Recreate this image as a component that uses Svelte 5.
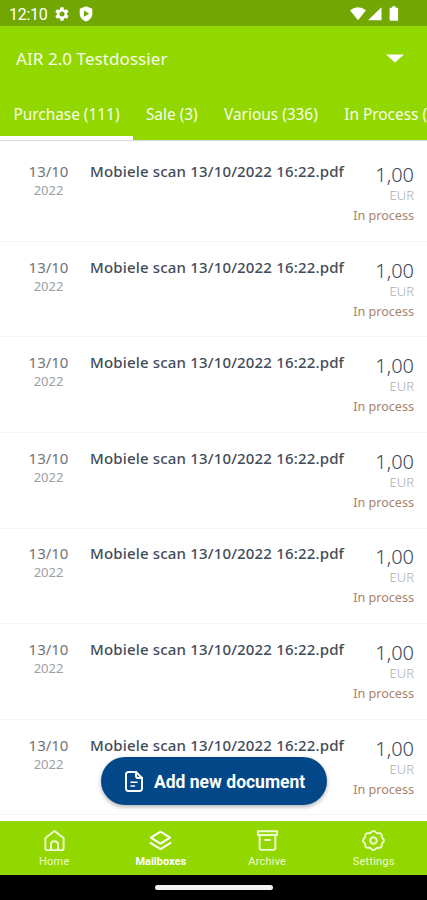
<script>
  const tabs = ['Purchase (111)', 'Sale (3)', 'Various (336)', 'In Process (4)'];

  const documents = Array.from({ length: 7 }, (_, id) => ({
    id,
    day: '13/10',
    year: '2022',
    name: 'Mobiele scan 13/10/2022 16:22.pdf',
    amount: '1,00',
    currency: 'EUR',
    status: 'In process'
  }));

  let activeTab = $state(0);
  let activePage = $state('Mailboxes');
</script>

<div class="screen">
  <div class="statusbar">
    <span class="clock">12:10</span>
    <svg class="gear" width="16" height="16" viewBox="0 0 24 24" fill="#fff">
      <path fill-rule="evenodd" d="M19.4 13a7.5 7.5 0 0 0 0-2l2.1-1.6c.2-.2.3-.4.1-.7l-2-3.4c-.1-.2-.4-.3-.6-.2l-2.5 1a7.3 7.3 0 0 0-1.7-1l-.4-2.6c0-.3-.2-.5-.5-.5h-4c-.2 0-.4.2-.5.5L9 5.1a7.3 7.3 0 0 0-1.7 1l-2.4-1c-.3-.1-.5 0-.7.2l-2 3.4c-.1.3 0 .5.2.7L4.500 11a7.500 7.500 0 0 0 0 2l-2.100 1.600c-.2.2-.3.4-.2.7l2 3.4c.2.2.4.3.7.2l2.4-1c.5.4 1.1.7 1.7 1l.4 2.6c.1.3.3.5.5.5h4c.3 0 .5-.2.5-.5l.4-2.6a7.3 7.3 0 0 0 1.7-1l2.5 1c.2.1.5 0 .6-.2l2-3.4c.2-.3.1-.5-.1-.7zM12 8.2a3.8 3.8 0 1 1 0 7.6 3.8 3.8 0 0 1 0-7.6z" />
    </svg>
    <svg class="shield" width="14" height="16" viewBox="0 0 14 16">
      <path d="M7 .3 13.3 2.8V7.5C13.3 11.3 10.6 14.4 7 15.6 3.4 14.4.7 11.3.7 7.5V2.8z" fill="#fff" />
      <path d="M5 4.6 10.2 7.7 5 10.8z" fill="#72a603" />
    </svg>
    <svg class="signals" width="50" height="16" viewBox="0 0 50 16" fill="#fff">
      <path d="M0 4.200Q8 -1.800 16 4.200L8 14.200z" />
      <path d="M31.500 1.300V14.200H18z" />
      <path d="M42.200.3h3.400v1.500h1.500q1 0 1 1v11q0 1-1 1h-6.500q-1 0-1-1v-11q0-1 1-1h1.600z" />
    </svg>
  </div>

  <header>
    <div class="dossier">
      <h1>AIR 2.0 Testdossier</h1>
      <svg width="18" height="9" viewBox="0 0 18 9"><path d="M0 .5H18L9 8.500z" fill="#fff" /></svg>
    </div>
    <nav class="tabs">
      {#each tabs as tab, i}
        <button class:active={i === activeTab} onclick={() => (activeTab = i)}>{tab}</button>
      {/each}
    </nav>
  </header>

  <main>
    {#each documents as doc (doc.id)}
      <article>
        <div class="date">
          <span class="day">{doc.day}</span>
          <span class="year">{doc.year}</span>
        </div>
        <div class="name">{doc.name}</div>
        <div class="total">
          <span class="amount">{doc.amount}</span>
          <span class="currency">{doc.currency}</span>
          <span class="status">{doc.status}</span>
        </div>
      </article>
    {/each}
    <button class="add">
      <svg width="18" height="21" viewBox="0 0 18 21" fill="none" stroke="#fff" stroke-width="1.9" stroke-linejoin="round" stroke-linecap="round">
        <path d="M11 1H3.500Q1 1 1 3.500v14Q1 20 3.500 20h11q2.500 0 2.500-2.500V7z" />
        <path d="M11 1v4q0 2 2 2h4" />
        <path d="M6 11.200h6M6 15h3.500" stroke-width="1.6" />
      </svg>
      <span>Add new document</span>
    </button>
  </main>

  <nav class="bottom">
    <button class:current={activePage === 'Home'} onclick={() => (activePage = 'Home')}>
      <svg viewBox="0 0 24 24">
        <path d="M2.500 9.500 12 2l9.500 7.500V20q0 2-2 2h-15q-2 0-2-2z" />
        <path d="M8.300 22v-6q0-3.300 3.700-3.300t3.700 3.300v6" />
      </svg>
      <span>Home</span>
    </button>
    <button class:current={activePage === 'Mailboxes'} onclick={() => (activePage = 'Mailboxes')}>
      <svg viewBox="0 0 24 24">
        <path d="M12 2.800 22 9 12 15.200 2 9z" />
        <path d="m1.500 14.500 10.500 6.500 10.500-6.500" />
      </svg>
      <span>Mailboxes</span>
    </button>
    <button class:current={activePage === 'Archive'} onclick={() => (activePage = 'Archive')}>
      <svg viewBox="0 0 24 24">
        <path d="M2 2.300h20v4H2zM3.800 6.500v13q0 2.300 2.300 2.300h11.800q2.300 0 2.300-2.300v-13M9.500 11.500h5" />
      </svg>
      <span>Archive</span>
    </button>
    <button class:current={activePage === 'Settings'} onclick={() => (activePage = 'Settings')}>
      <svg viewBox="0 0 24 24">
        <path d="M9.500 3.500Q12 .4 14.500 3.500q1 1.200 2.600.9 3.500-.6 3.500 3-.1 1.500 1.200 2.500 2.200 2.100 0 4.200-1.300 1-1.200 2.500 0 3.600-3.500 3-1.600-.3-2.600.9Q12 23.600 9.500 20.500q-1-1.200-2.600-.9-3.500.6-3.500-3 .1-1.500-1.200-2.500-2.200-2.100 0-4.200 1.300-1 1.200-2.500 0-3.600 3.500-3 1.600.3 2.600-.9z" />
        <circle cx="12" cy="12" r="3.400" />
      </svg>
      <span>Settings</span>
    </button>
  </nav>

  <div class="gesture"><div class="pill"></div></div>
</div>

<style>
  .screen {
    display: flex;
    flex-direction: column;
    width: 427px;
    height: 900px;
    overflow: hidden;
    background: #fff;
    font-family: 'Noto Sans', sans-serif;
  }

  button {
    padding: 0;
    border: 0;
    background: none;
    font-family: inherit;
    cursor: pointer;
  }

  svg {
    display: block;
    flex: none;
  }

  .statusbar {
    display: flex;
    align-items: center;
    flex: none;
    height: 26px;
    padding: 2px 27px 0 9px;
    box-sizing: border-box;
    background: #72a603;
    color: #fff;
  }

  .clock {
    width: 45px;
    padding-top: 1px;
    font: 400 16px/20px Roboto, sans-serif;
    letter-spacing: -0.3px;
  }

  .shield {
    margin-left: 9px;
  }

  .signals {
    margin-left: auto;
  }

  header {
    flex: none;
    height: 114px;
    background: #92d700;
    color: #f8fdea;
  }

  .dossier {
    display: flex;
    align-items: center;
    justify-content: space-between;
    height: 64px;
    padding: 0 23px 0 16px;
  }

  h1 {
    margin: 0;
    font-size: 17px;
    font-weight: 400;
    letter-spacing: 0.07px;
  }

  .tabs {
    display: flex;
    height: 50px;
    overflow: hidden;
  }

  .tabs button {
    flex: none;
    height: 50px;
    padding: 2px 13px 0 13.4px;
    box-sizing: border-box;
    border-bottom: 4px solid transparent;
    color: inherit;
    font-size: 15.4px;
    white-space: nowrap;
  }

  .tabs .active {
    border-bottom-color: #fff;
  }

  main {
    position: relative;
    flex: none;
    height: 681px;
    padding-top: 5.2px;
    box-sizing: border-box;
    border-top: 1px solid #d9dfd4;
    overflow: hidden;
  }

  article {
    display: flex;
    height: 95.6px;
    padding: 14.8px 13px 0 22px;
    box-sizing: border-box;
    border-bottom: 1px solid #f4f4f5;
  }

  .date {
    display: flex;
    flex-direction: column;
    align-items: center;
    width: 53px;
  }

  .day {
    color: #6f747b;
    font-size: 15px;
    line-height: 20px;
  }

  .year {
    color: #9da0a4;
    font-size: 13px;
    line-height: 18px;
  }

  .name {
    flex: 1;
    padding-left: 15px;
    color: #424c58;
    font-size: 15px;
    font-weight: 500;
    letter-spacing: 0.17px;
    line-height: 20px;
    white-space: nowrap;
  }

  .total {
    display: flex;
    flex-direction: column;
    align-items: flex-end;
    margin-left: -20px;
  }

  .amount {
    color: #3c4856;
    font-size: 20px;
    font-weight: 300;
    line-height: 27px;
  }

  .currency {
    color: #aaadb2;
    font-size: 13px;
    font-weight: 300;
    line-height: 14px;
  }

  .status {
    margin-top: 5px;
    color: #a9826a;
    font-size: 12.6px;
    line-height: 18px;
  }

  /* floats over the last row */
  .add {
    position: absolute;
    left: 101px;
    bottom: 16px;
    display: flex;
    align-items: center;
    gap: 11px;
    width: 226px;
    height: 48px;
    padding-left: 24px;
    border-radius: 24px;
    background: #024889;
    box-shadow: 0 2px 4px rgba(0, 0, 0, 0.3);
    color: #fff;
    font: 700 17.5px/20px Roboto, sans-serif;
    white-space: nowrap;
  }

  .add span {
    padding-top: 1px;
  }

  .bottom {
    display: flex;
    flex: none;
    height: 54px;
    padding-left: 1px;
    box-sizing: border-box;
    background: #92d700;
  }

  .bottom button {
    display: flex;
    flex: 1;
    flex-direction: column;
    align-items: center;
    padding-top: 8px;
    color: #f0fbd2;
    font: 400 11px/14px Roboto, sans-serif;
    letter-spacing: 0.2px;
  }

  .bottom .current {
    color: #fff;
    font-weight: 700;
    letter-spacing: 0;
  }

  .bottom svg {
    width: 23px;
    height: 23px;
    margin: 0 0 3px;
    fill: none;
    stroke: currentColor;
    stroke-width: 2;
    stroke-linejoin: round;
    stroke-linecap: round;
  }

  .gesture {
    display: flow-root;
    flex: 1;
    background: #000;
  }

  .pill {
    width: 118px;
    height: 5px;
    margin: 10px auto 0;
    border-radius: 3px;
    background: #f2f2f2;
  }
</style>
